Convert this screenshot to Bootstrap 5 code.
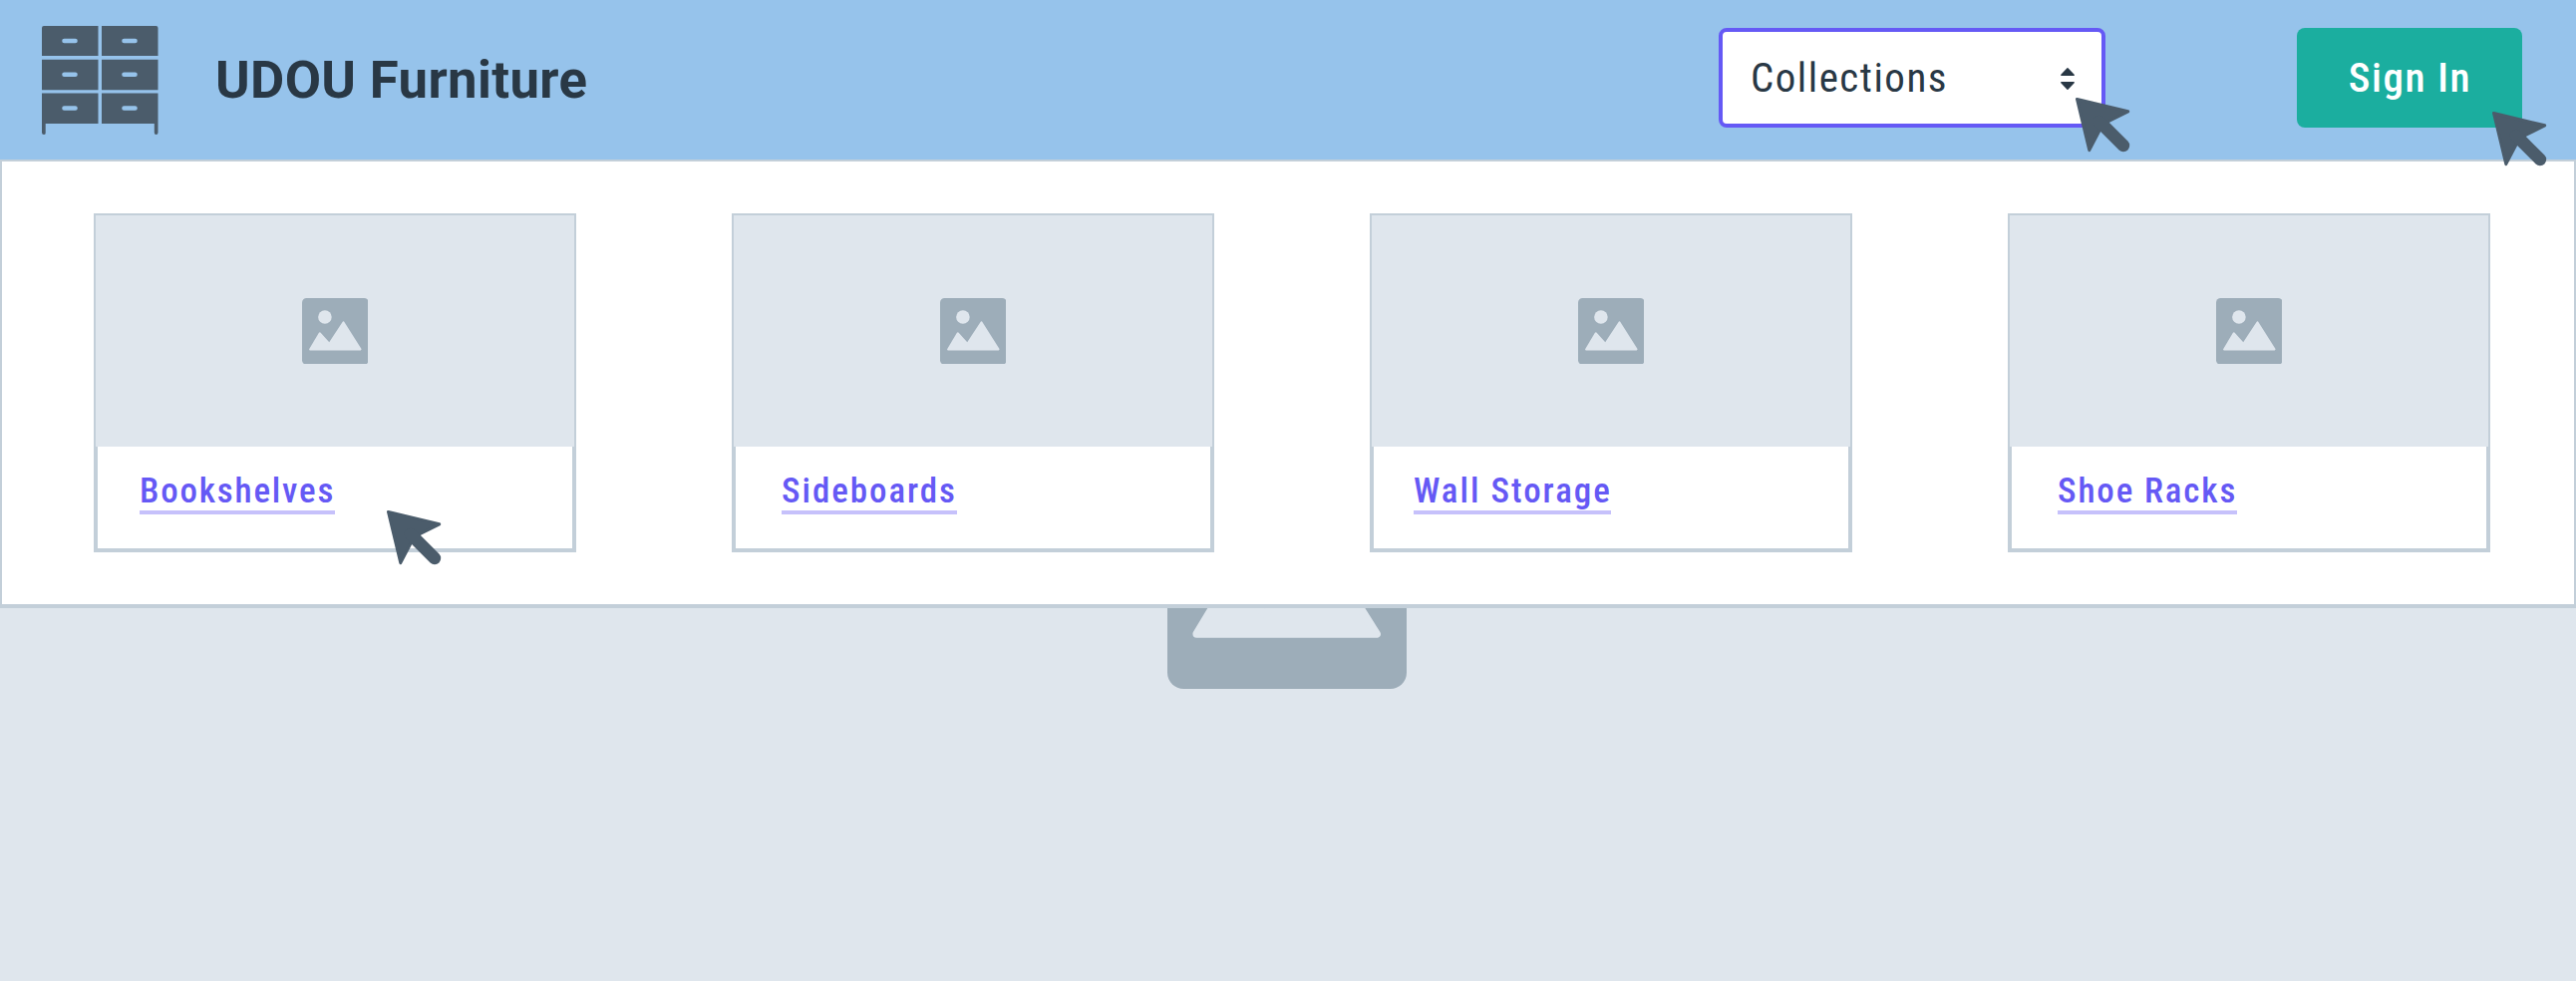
<!DOCTYPE html>
<html lang="en">
<head>
<meta charset="utf-8">
<meta name="viewport" content="width=device-width, initial-scale=1">
<title>UDOU Furniture</title>
<link href="https://cdn.jsdelivr.net/npm/bootstrap@5.3.0/dist/css/bootstrap.min.css" rel="stylesheet">
<style>
  body { background: #dfe6ed; font-family: "Roboto Condensed", Roboto, sans-serif; color: #293845; height: 984px; overflow: hidden; }
  .topbar { background: #96c3eb; height: 160px; padding: 0 54px 4px 42px; }
  .logo { width: 117px; height: 110px; margin-top: 5px; }
  .title { font: 700 52.7px/60px Roboto, sans-serif; letter-spacing: .35px; margin: 4px 0 0 57px; color: #293845; }
  .picker { width: 388px; height: 100px; background: #fff; border: 4px solid #6559f5; border-radius: 8px; padding: 2px 27px 0 28px; font-size: 41px; font-weight: 450; letter-spacing: 1.5px; color: #293845; margin-right: 192px; }
  .signin { width: 226px; height: 100px; background: #1bae9f; border-radius: 8px; border: 0; font-size: 41px; font-weight: 500; letter-spacing: 1.6px; color: #fff; padding: 2px 0 0 1px; }
  .pointer { position: absolute; width: 56px; height: 56px; z-index: 5; color: #4b5c6b; }
  .on-picker { left: 358px; top: 70px; }
  .on-signin { left: 196px; top: 84px; }
  .on-shelf { left: 290px; top: 294px; }
  .panel { height: 450px; background: #fff; border: 2px solid #c3cfd9; border-bottom-width: 4px; padding: 52px 84px 0 92px; }
  .tile { width: 484px; height: 340px; background: #fff; border: 4px solid #c3cfd9; }
  .thumb { height: 232px; margin: -2px -2px 0; background: #dfe6ed; }
  .thumb svg { width: 66.8px; height: 66.8px; }
  .tile-link { display: inline-block; font-size: 35px; line-height: 40px; height: 44px; padding-top: 1px; font-weight: 500; color: #6559f5; border-bottom: 4px solid #c6c1fb; text-decoration: none; white-space: nowrap; margin-top: 24px; }
  .bookshelves { margin-left: 42px; width: 196px; letter-spacing: 1.8px; }
  .sideboards { margin-left: 46px; width: 176px; letter-spacing: 1.95px; }
  .wall-storage { margin-left: 40px; width: 198px; letter-spacing: 2px; }
  .shoe-racks { margin-left: 46px; width: 180px; letter-spacing: 1.85px; }
  .hero { height: 374px; overflow: hidden; }
  .hero svg { width: 240px; height: 240px; margin: -159px 2px 0 0; }
</style>
</head>
<body>
<svg class="d-none">
  <symbol id="photo" viewBox="0 0 67 67">
    <rect width="67" height="67" rx="4.6" fill="#9dadb9"/>
    <circle cx="23" cy="19" r="6.8" fill="#dfe6ed"/>
    <path d="M8.2 51.6 17.9 35.5 27.4 46.2 41.6 24.6 58.6 51.6Z" fill="#dfe6ed" stroke="#dfe6ed" stroke-width="2.2" stroke-linejoin="round"/>
  </symbol>
  <symbol id="arrow" viewBox="0 0 56 56">
    <path d="M1.5 1.5 52.7 13.8 31.5 24.5 24.5 32 13.8 52.6Z" fill="currentColor" stroke="currentColor" stroke-width="3" stroke-linejoin="round"/>
    <path d="M24 24 48 48" stroke="currentColor" stroke-width="12.4" stroke-linecap="round"/>
  </symbol>
</svg>

<header class="topbar d-flex align-items-center">
  <svg class="logo flex-shrink-0" viewBox="0 0 117 110" fill="#4b5c6b">
    <path d="M2 0H56.5V30H0V2Q0 0 2 0ZM60 0H114.500Q116.500 0 116.500 2V30H60ZM0 33.700H56.500V64.300H0ZM60 33.700H116.500V64.300H60ZM0 67.500H56.500V98H3.700V107.500Q3.700 109 1.900 109Q0 109 0 107ZM60 67.500H116.500V107Q116.500 109 114.600 109Q112.800 109 112.800 107V98H60Z"/>
    <path d="M22.500 15H33.500M82.500 15H93.500M22.500 48.800H33.500M82.500 48.800H93.500M22.500 82.500H33.500M82.500 82.500H93.500" stroke="#96c3eb" stroke-width="4.600" stroke-linecap="round"/>
  </svg>
  <h1 class="title text-nowrap">UDOU Furniture</h1>
  <div class="position-relative ms-auto">
    <button class="picker d-flex align-items-center justify-content-between" type="button">
      <span>Collections</span>
      <svg width="14" height="22" viewBox="0 0 14 22" fill="#293845"><path d="M7 .800 13.200 7.200H.800ZM7 21.200.800 14.800H13.200Z" stroke="#293845" stroke-width="1.400" stroke-linejoin="round"/></svg>
    </button>
    <svg class="pointer on-picker"><use href="#arrow"/></svg>
  </div>
  <div class="position-relative">
    <button class="signin" type="button">Sign In</button>
    <svg class="pointer on-signin"><use href="#arrow"/></svg>
  </div>
</header>

<nav class="panel d-flex justify-content-between align-items-start">
  <div class="tile position-relative">
    <div class="thumb d-flex align-items-center justify-content-center"><svg><use href="#photo"/></svg></div>
    <a class="tile-link bookshelves" href="#">Bookshelves</a>
    <svg class="pointer on-shelf"><use href="#arrow"/></svg>
  </div>
  <div class="tile">
    <div class="thumb d-flex align-items-center justify-content-center"><svg><use href="#photo"/></svg></div>
    <a class="tile-link sideboards" href="#">Sideboards</a>
  </div>
  <div class="tile">
    <div class="thumb d-flex align-items-center justify-content-center"><svg><use href="#photo"/></svg></div>
    <a class="tile-link wall-storage" href="#">Wall Storage</a>
  </div>
  <div class="tile">
    <div class="thumb d-flex align-items-center justify-content-center"><svg><use href="#photo"/></svg></div>
    <a class="tile-link shoe-racks" href="#">Shoe Racks</a>
  </div>
</nav>

<main class="hero d-flex justify-content-center align-items-start">
  <svg><use href="#photo"/></svg>
</main>
<script src="https://cdn.jsdelivr.net/npm/bootstrap@5.3.0/dist/js/bootstrap.bundle.min.js"></script>
</body>
</html>
